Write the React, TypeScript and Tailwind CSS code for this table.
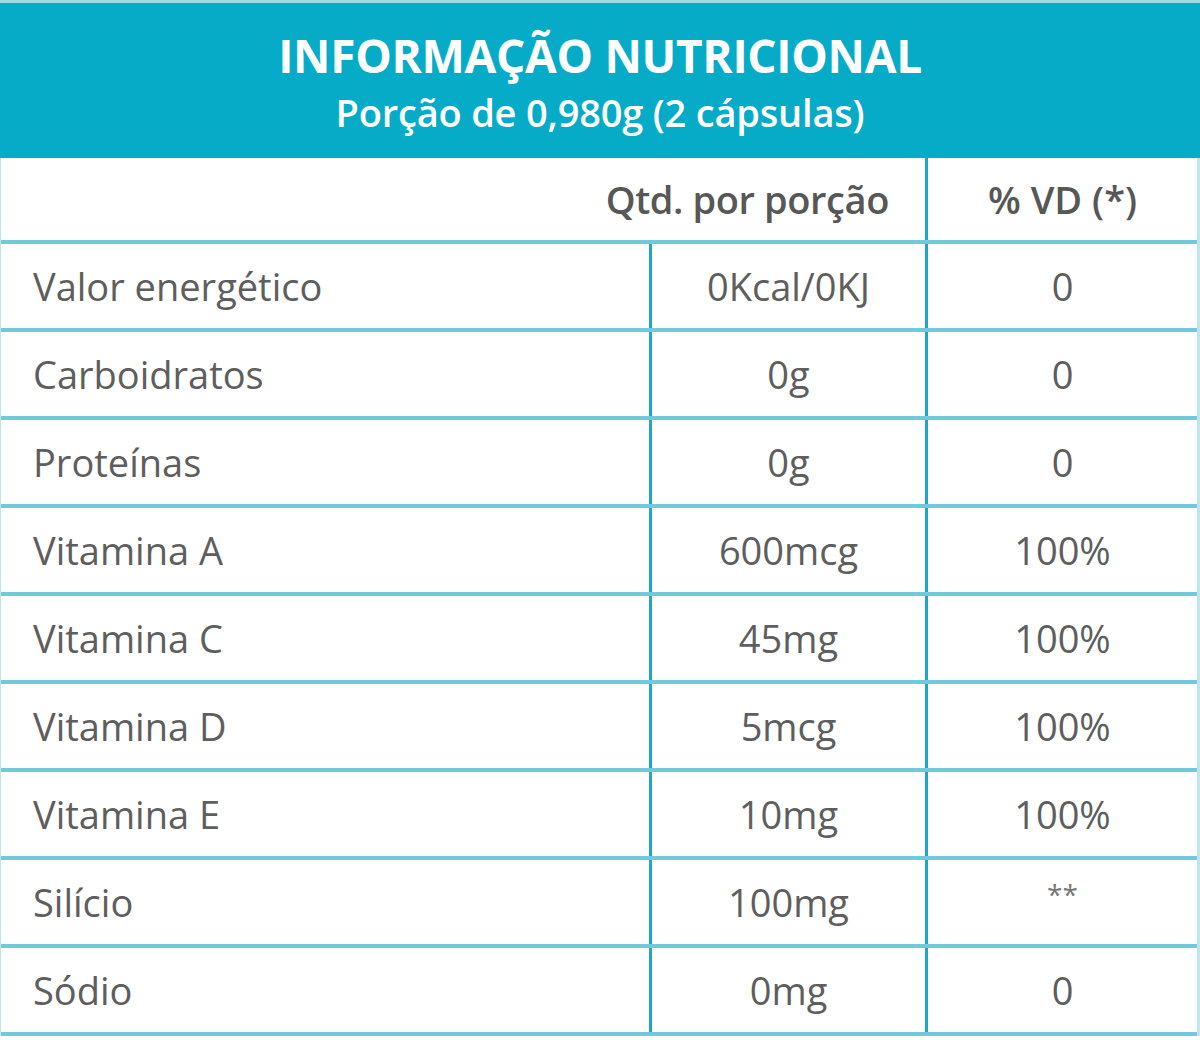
const rows: [string, string, string][] = [
  ["Valor energético", "0Kcal/0KJ", "0"],
  ["Carboidratos", "0g", "0"],
  ["Proteínas", "0g", "0"],
  ["Vitamina A", "600mcg", "100%"],
  ["Vitamina C", "45mg", "100%"],
  ["Vitamina D", "5mcg", "100%"],
  ["Vitamina E", "10mg", "100%"],
  ["Silício", "100mg", "**"],
  ["Sódio", "0mg", "0"],
];

export default function App() {
  return (
    <div className="w-[1200px] h-[1040px] bg-white font-['Open_Sans',sans-serif] text-[#5e5e5e] overflow-hidden">
      {/* Title band */}
      <div className="h-[158px] bg-[#06acc7] border-t-[3px] border-[#9fdbe5] flex flex-col items-center text-white">
        <div className="mt-[23px] text-[46px] leading-[58px] font-bold tracking-[-0.3px]">
          INFORMAÇÃO NUTRICIONAL
        </div>
        <div className="mt-[3px] text-[38px] leading-[50px] font-semibold tracking-[-0.2px]">
          Porção de 0,980g (2 cápsulas)
        </div>
      </div>

      <div className="border-r-[3px] border-l border-[#bfe6ed]">
        {/* Column headings */}
        <div className="h-[86px] flex border-b-4 border-[#6fcbd9]">
          <div className="w-[927px] flex items-center justify-end pr-[36px] border-r-[3px] border-r-[#1aa8c3] text-[38px] font-semibold text-[#575757] tracking-[-0.4px]">
            Qtd. por porção
          </div>
          <div className="flex-1 flex items-center justify-center text-[38px] font-semibold text-[#575757]">
            % VD (*)
          </div>
        </div>

        {/* Rows */}
        {rows.map(([name, qty, vd]) => (
          <div key={name} className="h-[88px] flex border-b-4 border-[#6fcbd9] text-[38px]">
            <div className="w-[651px] flex items-center pl-[32px] border-r-[3px] border-r-[#1aa8c3]">
              {name}
            </div>
            <div className="w-[276px] flex items-center justify-center border-r-[3px] border-r-[#1aa8c3]">
              {qty}
            </div>
            <div className="flex-1 flex items-center justify-center">
              {vd === "**" ? <span className="text-[28px] text-[#777] -translate-y-[8px]">**</span> : vd}
            </div>
          </div>
        ))}
      </div>
    </div>
  );
}
